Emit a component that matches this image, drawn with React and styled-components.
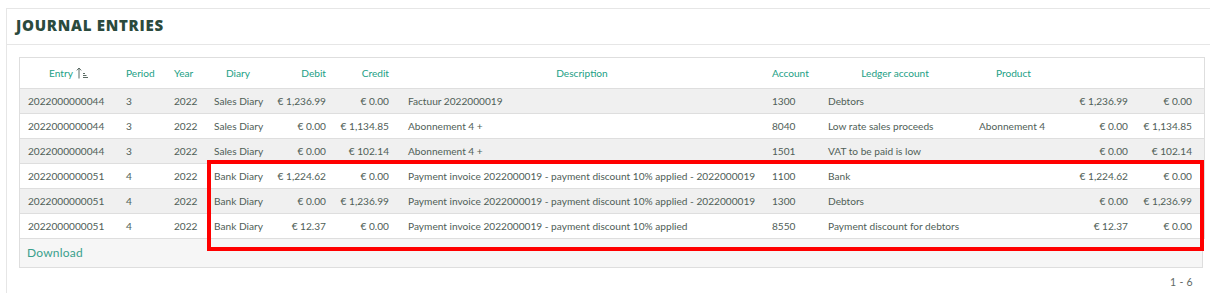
import React from "react";
import styled, { createGlobalStyle } from "styled-components";

const GlobalStyle = createGlobalStyle`
  html, body { margin: 0; padding: 0; background: #ffffff; overflow: hidden; }
  body { font-family: Lato, "Liberation Sans", sans-serif; }
`;

const COLS = "98px 48px 40px 64px 64px 64px 366px 56px 150px 86px 80px 66px";

const Page = styled.div`
  padding: 8px 0 0 6px;
  width: 1230px;
`;

const Card = styled.section`
  border: 1px solid #e6e6e6;
  background: #fff;
  min-height: 300px;
`;

const CardHeader = styled.header`
  height: 36px;
  box-sizing: border-box;
  padding: 0 0 3px 9px;
  border-bottom: 1px solid #e6e6e6;
  display: flex;
  align-items: center;
`;

const Title = styled.h2`
  margin: 0;
  font-family: "Open Sans", sans-serif;
  font-weight: 800;
  font-size: 15px;
  letter-spacing: 0.75px;
  color: #2b4a3d;
  text-transform: uppercase;
`;

const CardBody = styled.div`
  padding: 12px 0 0 12px;
`;

const Table = styled.div`
  width: 1184px;
  border: 1px solid #dedede;
  border-bottom: none;
`;

const Row = styled.div`
  display: grid;
  grid-template-columns: ${COLS};
  height: ${(p) => (p.$head ? 30 : 24)}px;
  border-bottom: 1px solid #dedede;
  background: ${(p) => (p.$striped ? "#f0f0f0" : "#ffffff")};
  align-items: center;
`;

const Cell = styled.div`
  padding: 0 ${(p) => p.$pr ?? 8}px 0 ${(p) => p.$pl ?? 8}px;
  font-size: 10.15px;
  letter-spacing: 0;
  color: ${(p) => (p.$head ? "#22a085" : "#4f5e57")};
  white-space: nowrap;
  display: flex;
  align-items: center;
  justify-content: ${(p) =>
    p.$align === "right" ? "flex-end" : p.$align === "center" ? "center" : "flex-start"};
`;

const SortIcon = styled.svg`
  margin-left: 3px;
  flex: none;
`;

const Footer = styled.div`
  width: 1184px;
  box-sizing: border-box;
  height: 29px;
  border: 1px solid #dedede;
  border-top: none;
  background: #f6f6f6;
  display: flex;
  align-items: center;
  padding: 0 0 2px 7px;
`;

const DownloadLink = styled.a`
  font-size: 12px;
  letter-spacing: 0.2px;
  color: #3aa08c;
  text-decoration: none;
  cursor: pointer;
`;

const Pager = styled.div`
  width: 1184px;
  display: flex;
  justify-content: flex-end;
  padding: 8px 10px 0 0;
  box-sizing: border-box;
  font-size: 10.5px;
  letter-spacing: 0.3px;
  color: #5f6a65;
`;

const Highlight = styled.div`
  position: absolute;
  left: 207px;
  top: 160px;
  width: 997px;
  height: 91px;
  box-sizing: border-box;
  border: 4px solid #ff0000;
  pointer-events: none;
`;

const columns = [
  { key: "entry", label: "Entry", headAlign: "center", align: "left", sort: true },
  { key: "period", label: "Period", headAlign: "left", align: "left" },
  { key: "year", label: "Year", headAlign: "left", align: "left" },
  { key: "diary", label: "Diary", headAlign: "center", align: "left" },
  { key: "debit", label: "Debit", headAlign: "right", align: "right" },
  { key: "credit", label: "Credit", headAlign: "right", align: "right", pr: 9 },
  { key: "desc", label: "Description", headAlign: "center", align: "left", pl: 10 },
  { key: "account", label: "Account", headAlign: "left", align: "left" },
  { key: "ledger", label: "Ledger account", headAlign: "center", align: "left" },
  { key: "product", label: "Product", headAlign: "center", align: "left", pl: 9 },
  { key: "x", label: "", headAlign: "right", align: "right" },
  { key: "y", label: "", headAlign: "right", align: "right", pr: 10 },
];

const rows = [
  ["2022000000044", "3", "2022", "Sales Diary", "€ 1,236.99", "€ 0.00", "Factuur 2022000019", "1300", "Debtors", "", "€ 1,236.99", "€ 0.00"],
  ["2022000000044", "3", "2022", "Sales Diary", "€ 0.00", "€ 1,134.85", "Abonnement 4 +", "8040", "Low rate sales proceeds", "Abonnement 4", "€ 0.00", "€ 1,134.85"],
  ["2022000000044", "3", "2022", "Sales Diary", "€ 0.00", "€ 102.14", "Abonnement 4 +", "1501", "VAT to be paid is low", "", "€ 0.00", "€ 102.14"],
  ["2022000000051", "4", "2022", "Bank Diary", "€ 1,224.62", "€ 0.00", "Payment invoice 2022000019 - payment discount 10% applied - 2022000019", "1100", "Bank", "", "€ 1,224.62", "€ 0.00"],
  ["2022000000051", "4", "2022", "Bank Diary", "€ 0.00", "€ 1,236.99", "Payment invoice 2022000019 - payment discount 10% applied - 2022000019", "1300", "Debtors", "", "€ 0.00", "€ 1,236.99"],
  ["2022000000051", "4", "2022", "Bank Diary", "€ 12.37", "€ 0.00", "Payment invoice 2022000019 - payment discount 10% applied", "8550", "Payment discount for debtors", "", "€ 12.37", "€ 0.00"],
];

const SortAsc = () => (
  <SortIcon width="13" height="12" viewBox="0 0 13 12" fill="none">
    <path d="M3 11.5V1" stroke="#5b6b64" strokeWidth="1" />
    <path d="M0.8 3.4L3 1L5.2 3.4" stroke="#5b6b64" strokeWidth="1" />
    <path d="M7 6.5h2M7 8.5h3.5M7 10.5h5" stroke="#5b6b64" strokeWidth="1" />
  </SortIcon>
);

export default function App() {
  return (
    <>
      <GlobalStyle />
      <Page>
        <Card>
          <CardHeader>
            <Title>Journal Entries</Title>
          </CardHeader>
          <CardBody>
            <Table>
              <Row $head>
                {columns.map((c) => (
                  <Cell key={c.key} $head $align={c.headAlign} $pl={c.pl} $pr={c.pr}>
                    {c.label}
                    {c.sort && <SortAsc />}
                  </Cell>
                ))}
              </Row>
              {rows.map((r, i) => (
                <Row key={i} $striped={i % 2 === 0}>
                  {r.map((v, j) => (
                    <Cell key={j} $align={columns[j].align} $pl={columns[j].pl} $pr={columns[j].pr}>
                      {v}
                    </Cell>
                  ))}
                </Row>
              ))}
            </Table>
            <Footer>
              <DownloadLink>Download</DownloadLink>
            </Footer>
            <Pager>1 - 6</Pager>
          </CardBody>
        </Card>
      </Page>
      <Highlight />
    </>
  );
}
